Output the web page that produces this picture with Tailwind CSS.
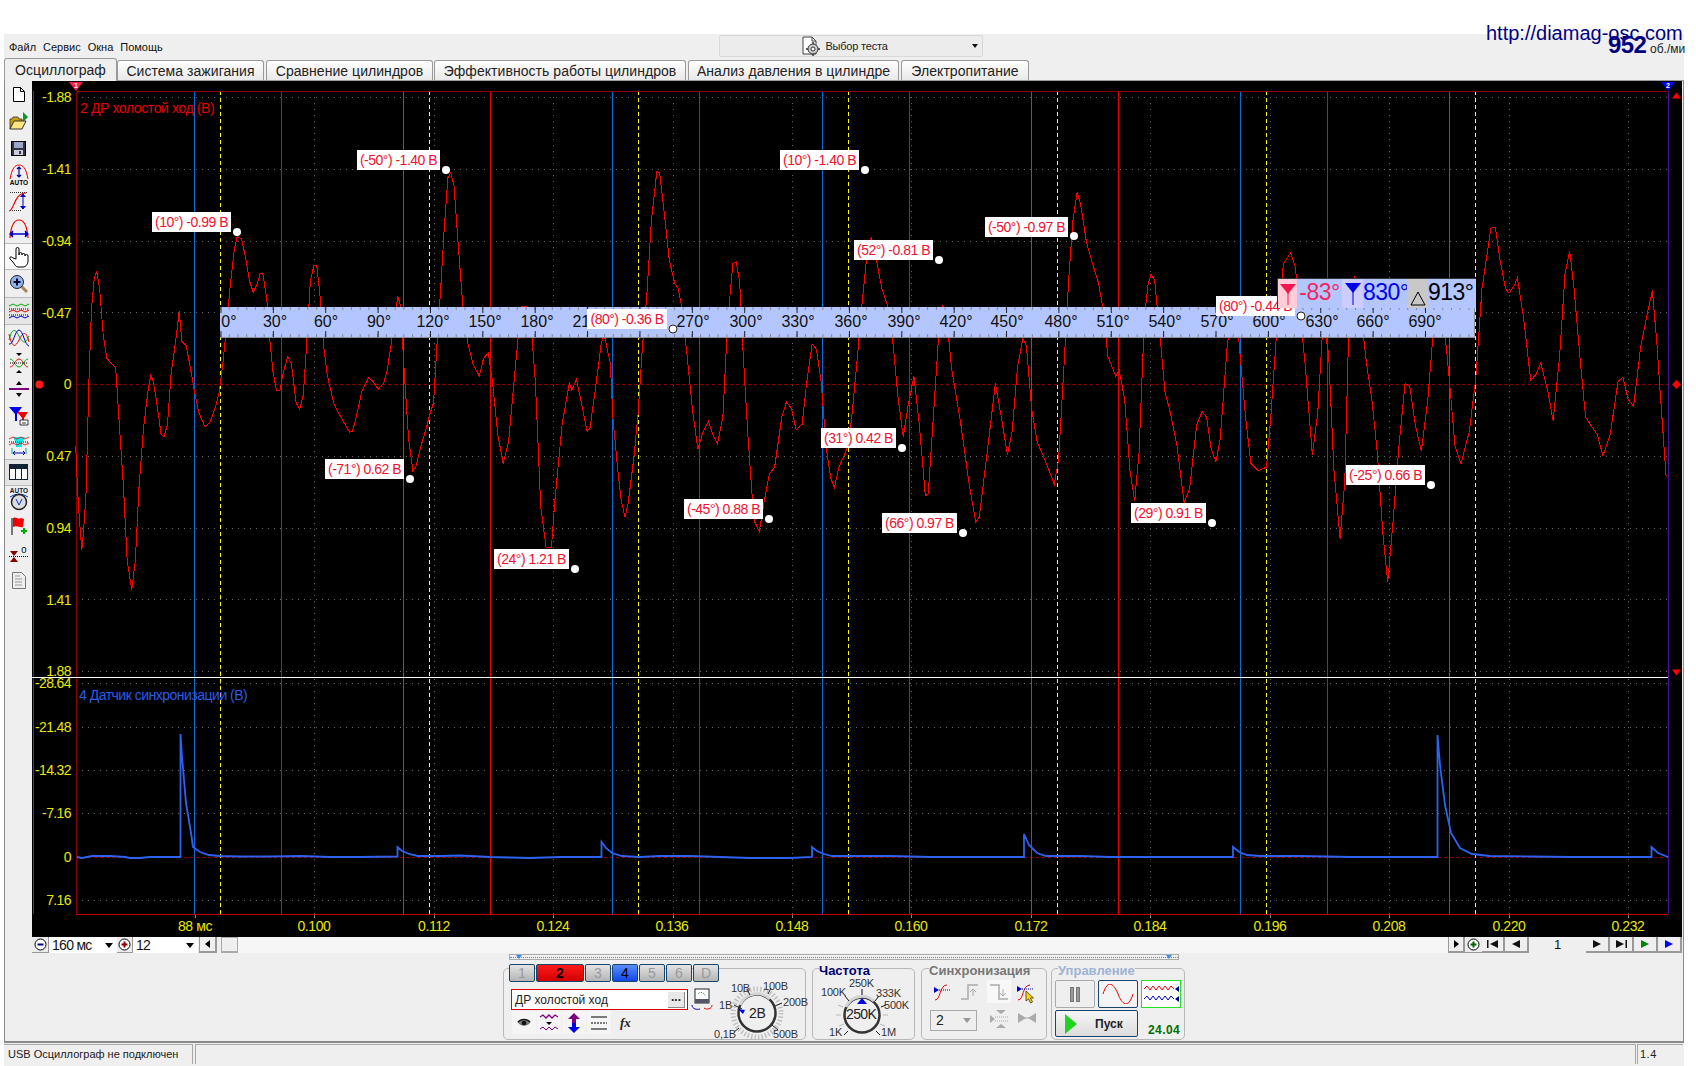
<!DOCTYPE html>
<html lang="ru">
<head>
<meta charset="utf-8">
<title>Diamag осциллограф</title>
<script src="https://cdn.jsdelivr.net/npm/@tailwindcss/browser@4"></script>
</head>
<body class="bg-white">
<div class="relative w-[1696px] h-[1066px] overflow-hidden bg-white font-['Liberation_Sans',sans-serif] text-black">

  <!-- адрес и обороты поверх шапки -->
  <div class="absolute left-[1486px] top-[21px] text-[20px] leading-[24px] text-[#000080] z-10">http://diamag-osc.com</div>
  <div class="absolute left-[1608px] top-[32px] text-[24px] leading-[26px] font-bold text-[#000080] z-20 tracking-[-0.6px]">952</div>
  <div class="absolute left-[1650px] top-[42px] whitespace-nowrap text-[12px] leading-[14px] text-[#222] z-20">об./ми</div>

  <div class="h-[34px]"></div>

  <div class="ml-[4px] w-[1680px] h-[1032px] bg-[#efefef] flex flex-col">
    <!-- меню -->
    <div class="h-[24px] flex items-center">
      <div class="w-[715px] pl-[5px] flex gap-[7px] text-[11px] text-[#111] pt-[2px]">
        <span>Файл</span><span>Сервис</span><span>Окна</span><span>Помощь</span>
      </div>
      <div class="w-[264px] h-[22px] mt-[-1px] border border-[#d8d8d8] rounded-[2px] bg-[#ececec] flex items-center">
        <div class="flex-1 flex items-center justify-center gap-[3px] pt-[1px] text-[11px] tracking-[-0.2px] text-[#222]">
          <svg width="22" height="20" viewBox="0 0 22 20"><path d="M3 1h9l4 4v13H3z" fill="#fff" stroke="#444"/><path d="M12 1v4h4" fill="none" stroke="#444"/><circle cx="13" cy="13" r="5" fill="#ccc" stroke="#333"/><circle cx="13" cy="13" r="2" fill="#fff" stroke="#333"/><path d="M8 13H6M20 13h-2M13 8V6M13 20v-2" stroke="#333" stroke-width="1.500"/></svg>
          <span>Выбор теста</span>
        </div>
        <svg width="14" height="8" viewBox="0 0 14 8" class="mr-[0px]"><path d="M4 2h6L7 6z" fill="#111"/></svg>
      </div>
    </div>

    <!-- вкладки -->
    <div class="h-[23px] flex items-end text-[14px] leading-[20px] tracking-[0.05px] whitespace-nowrap text-[#222] border-b border-[#9a9a9a]">
      <div class="w-[113px] h-[23px] border border-b-0 border-[#9a9a9a] rounded-t-[3px] bg-[#efefef] flex items-center justify-center relative top-[1px]">Осциллограф</div>
      <div class="w-[147px] h-[20px] border border-b-0 border-[#9a9a9a] rounded-t-[3px] bg-gradient-to-b from-white to-[#e9e9e9] flex items-center justify-center">Система зажигания</div>
      <div class="w-[167px] h-[20px] ml-[2px] border border-b-0 border-[#9a9a9a] rounded-t-[3px] bg-gradient-to-b from-white to-[#e9e9e9] flex items-center justify-center">Сравнение цилиндров</div>
      <div class="w-[252px] h-[20px] ml-[1px] border border-b-0 border-[#9a9a9a] rounded-t-[3px] bg-gradient-to-b from-white to-[#e9e9e9] flex items-center justify-center">Эффективность работы цилиндров</div>
      <div class="w-[211px] h-[20px] ml-[2px] border border-b-0 border-[#9a9a9a] rounded-t-[3px] bg-gradient-to-b from-white to-[#e9e9e9] flex items-center justify-center">Анализ давления в цилиндре</div>
      <div class="w-[128px] h-[20px] ml-[2px] border border-b-0 border-[#9a9a9a] rounded-t-[3px] bg-gradient-to-b from-white to-[#e9e9e9] flex items-center justify-center">Электропитание</div>
    </div>

    <!-- панель инструментов и график -->
    <div class="h-[856px] flex border-x border-[#8a8a8a]">
      <div class="w-[27px] flex flex-col items-center shrink-0">
        <div class="h-[26px] w-full flex items-center justify-center"><svg width="14" height="17" viewBox="0 0 14 17"><path d="M1.5 1.5h7l4 4v10h-11z" fill="#fff" stroke="#000"/><path d="M8.5 1.5v4h4" fill="none" stroke="#000"/></svg></div>
        <div class="h-[28px] w-full flex items-center justify-center"><svg width="20" height="20" viewBox="0 0 20 20"><path d="M14 1l5 5-5 5z" fill="#0a9a2a"/><path d="M1 18V8h2l1-2h5l1 2h3v3H5z" fill="#c8a000" stroke="#333" stroke-width=".8"/><path d="M1 18l4-8h12l-4 8z" fill="#ffe680" stroke="#333"/></svg></div>
        <div class="h-[26px] w-full flex items-center justify-center"><svg width="15" height="15" viewBox="0 0 15 15"><rect x=".5" y=".5" width="14" height="14" fill="#334" stroke="#000"/><rect x="3" y="1" width="9" height="6" fill="#9aa8c8"/><rect x="3" y="9" width="9" height="5" fill="#ccd"/><rect x="8" y="10" width="2" height="3" fill="#334"/></svg></div>
        <div class="h-[27px] w-full flex items-center justify-center"><svg width="22" height="22" viewBox="0 0 22 22"><path d="M2 15C4 4 7 1 11 1s7 3 9 14" fill="none" stroke="#e00"/><path d="M11 3v10M9 5l2-2 2 2M9 11l2 2 2-2" fill="none" stroke="#00a" stroke-width="1.2"/><text x="11" y="21" text-anchor="middle" font-size="6.5" font-weight="700" font-family="Liberation Sans">AUTO</text></svg></div>
        <div class="h-[28px] w-full flex items-center justify-center"><svg width="22" height="22" viewBox="0 0 22 22"><path d="M2 1.5h18M2 19.5h12" stroke="#333" stroke-dasharray="1 1"/><path d="M1 20c5 0 5-18 17-18" fill="none" stroke="#e00" stroke-width="1.2"/><path d="M15 3v15M12.500 6l2.500-3 2.500 3M12.500 15l2.500 3 2.500-3" fill="#00c" stroke="#00c"/></svg></div>
        <div class="h-[27px] w-full flex items-center justify-center"><svg width="22" height="22" viewBox="0 0 22 22"><path d="M2 19C3 6 7 1 11 1s8 5 9 18" fill="none" stroke="#e00" stroke-width="1.2"/><path d="M2 15h18M5 12l-3 3 3 3M17 12l3 3-3 3" fill="#00c" stroke="#00c" stroke-width="1.3"/></svg></div>
        <div class="h-[27px] w-full flex items-center justify-center bg-[#f8f8f8] border-y border-[#bbb]"><svg width="20" height="22" viewBox="0 0 20 22"><path d="M7 13V3a1.500 1.500 0 0 1 3 0v6l0-1a1.500 1.500 0 0 1 3 0v1a1.500 1.500 0 0 1 3 0v1a1.500 1.500 0 0 1 3 0v5c0 3-2 6-5 6H9c-2 0-3-2-5-5l-3-3c-1-2 1-3 3-1z" fill="#fff" stroke="#000"/></svg></div>
        <div class="h-[27px] w-full flex items-center justify-center"><svg width="20" height="20" viewBox="0 0 20 20"><path d="M12 12l6 6" stroke="#a8884a" stroke-width="3"/><circle cx="8" cy="8" r="6.500" fill="#8fb4e8" stroke="#223"/><path d="M4.500 8h7M8 4.500v7" stroke="#003" stroke-width="2"/></svg></div>
        <div class="h-[28px] w-full flex items-center justify-center bg-[#e6e6e6] border-y border-[#bbb]"><svg width="22" height="20" viewBox="0 0 22 20"><path d="M1 5l4-2 4 2 4-2 4 2 4-2" fill="none" stroke="#0a0"/><path d="M1 11l4-2 4 2 4-2 4 2 4-2" fill="none" stroke="#e00"/><path d="M1 17l4-2 4 2 4-2 4 2 4-2" fill="none" stroke="#00c"/><path d="M1 8h20M1 14h20" stroke="#000" stroke-dasharray="1 1"/></svg></div>
        <div class="h-[25px] w-full flex items-center justify-center"><svg width="22" height="20" viewBox="0 0 22 20"><path d="M1 12C4 0 7 0 11 8s7 8 10 0" fill="none" stroke="#0a0"/><path d="M1 6c3 14 6 14 10 6s7-10 10 2" fill="none" stroke="#e00"/><path d="M1 16C5 18 7 2 11 2s6 16 10 16" fill="none" stroke="#00c"/></svg></div>
        <div class="h-[26px] w-full flex items-center justify-center"><svg width="20" height="22" viewBox="0 0 20 22"><path d="M7 1h6l-3 3zM7 21h6l-3-3z" fill="#000"/><path d="M1 7c4 0 5 8 9 8s5-8 9-8" fill="none" stroke="#0a0"/><path d="M1 15c4 0 5-8 9-8s5 8 9 8" fill="none" stroke="#e00"/><path d="M1 11h18" stroke="#000" stroke-dasharray="1 1"/></svg></div>
        <div class="h-[26px] w-full flex items-center justify-center"><svg width="20" height="18" viewBox="0 0 20 18"><path d="M7 5h6l-3-4zM7 13h6l-3 4z" fill="#000"/><path d="M0 9h20" stroke="#800080" stroke-width="2"/></svg></div>
        <div class="h-[28px] w-full flex items-center justify-center"><svg width="20" height="20" viewBox="0 0 20 20"><path d="M0 1h13L8 8v7H6V8z" fill="#00e"/><path d="M8 6h11l-4 6v7h-2v-7z" fill="#e00"/><path d="M11 14h8v5h-8z" fill="#fff" stroke="#334"/><path d="M13 17h4" stroke="#334"/></svg></div>
        <div class="h-[29px] w-full flex items-center justify-center"><svg width="22" height="22" viewBox="0 0 22 22"><path d="M5 3h12l-3 6v4H8V9z" fill="#0ee"/><path d="M1 5l4-2 4 2 4-2 4 2 4-2M1 11l4-2 4 2 4-2 4 2 4-2" fill="none" stroke="#e00" stroke-width=".8"/><path d="M1 8h20" stroke="#000" stroke-dasharray="1 1"/><path d="M5 19h12M7 17l-2 2 2 2M15 17l2 2-2 2" fill="none" stroke="#00a"/><path d="M4 14v6M18 14v6" stroke="#0aa"/></svg></div>
        <div class="h-[27px] w-full flex items-center justify-center bg-[#e4e4e4] border-y border-[#bbb]"><svg width="20" height="17" viewBox="0 0 20 17"><rect x=".5" y=".5" width="18" height="15" fill="#fff" stroke="#123"/><rect x="1" y="1" width="17" height="4" fill="#123"/><path d="M6.500 1v14M12.500 1v14" stroke="#123"/></svg></div>
        <div class="h-[25px] w-full flex flex-col items-center justify-center"><svg width="22" height="24" viewBox="0 0 22 24"><text x="11" y="6" text-anchor="middle" font-size="6.500" font-weight="700" font-family="Liberation Sans" fill="#123">AUTO</text><path d="M2 10Q11 4 20 10" fill="none" stroke="#03c"/><circle cx="11" cy="15" r="7.500" fill="#ddd" stroke="#222" stroke-width="1.500"/><path d="M8 12l3 6 3-6" fill="none" stroke="#03c"/></svg></div>
        <div class="h-[29px] w-full flex items-center justify-center"><svg width="18" height="20" viewBox="0 0 18 20"><path d="M2 2v17" stroke="#000"/><path d="M3 2c3-2 5 2 8 0l3 1-1 8c-3 1-6-2-10 0z" fill="#e00"/><path d="M11 15h6M14 12v6" stroke="#0a0" stroke-width="2"/></svg></div>
        <div class="h-[27px] w-full flex items-center justify-center"><svg width="20" height="18" viewBox="0 0 20 18"><path d="M1 6h8L5 11zM1 17h8L5 12z" fill="#800"/><path d="M0 11.500h20" stroke="#000" stroke-dasharray="1 1"/><text x="15" y="8" text-anchor="middle" font-size="9.500" font-family="Liberation Sans">0</text></svg></div>
        <div class="h-[27px] w-full flex items-center justify-center"><svg width="14" height="17" viewBox="0 0 14 17"><path d="M.5.5h9l4 4v12H.5z" fill="#eee" stroke="#777"/><path d="M3 4h5M3 7h7M3 10h7M3 13h7" stroke="#999"/></svg></div>
      </div>

      <div class="relative w-[1650px] h-[856px] bg-black overflow-hidden shrink-0">
        <svg class="absolute inset-0" width="1650" height="856" viewBox="32 81 1650 856" fill="none">
          <!-- сетка -->
          <g stroke="#666" stroke-dasharray="1 5">
            <path d="M76 97.500H1668M76 169.500H1668M76 241.500H1668M76 312.500H1668M76 456.500H1668M76 528.500H1668M76 599.500H1668M76 671.500H1668"/>
            <path d="M76 683.500H1668M76 727.500H1668M76 770.500H1668M76 813.500H1668M76 900.500H1668"/>
            <path d="M314.500 91V914M434.500 91V914M553.500 91V914M673.500 91V914M792.500 91V914M911.500 91V914M1150.500 91V914M1270.500 91V914M1389.500 91V914M1509.500 91V914M1628.500 91V914"/>
          </g>
          <path d="M76 384.500H1668M76 857.500H1668" stroke="#8a0000" stroke-dasharray="3 3"/>
          <path d="M195.500 914v4M314.500 914v4M434.500 914v4M553.500 914v4M673.500 914v4M792.500 914v4M911.500 914v4M1031.500 914v4M1150.500 914v4M1270.500 914v4M1389.500 914v4M1509.500 914v4M1628.500 914v4" stroke="#888"/>

          <!-- метки цилиндров -->
          <path d="M281.500 91V914M490.500 91V914M699.500 91V914M909.500 91V914M1118.500 91V914M1327.500 91V914" stroke="#f00000"/>
          <path d="M194.500 91V914M403.500 91V914M612.500 91V914M822.500 91V914M1031.500 91V914M1240.500 91V914M1449.500 91V914" stroke="#0a6cd8"/>
          <path d="M220.500 91V914M429.500 91V914M638.500 91V914M848.500 91V914M1057.500 91V914M1266.500 91V914M1475.500 91V914" stroke="#ffff00" stroke-dasharray="4 3"/>

          <!-- рамка -->
          <path d="M76 91.500H1668" stroke="#8a0000"/>
          <path d="M76 914.500H1668" stroke="#c00000"/>
          <path d="M76.500 91V914" stroke="#8a0000"/>
          <path d="M33.500 91V914" stroke="#e00000"/>
          <path d="M1668.500 91V914" stroke="#4a10a0"/>
          <path d="M32 677.500H1668" stroke="#fff"/>

          <!-- канал 2 -->
          <g stroke="#ff0000" shape-rendering="crispEdges">
            <polyline vector-effect="non-scaling-stroke" transform="translate(30 60) scale(.35714)" points="128,1080 133,1200 138,1280 145,1372 150,1320 157,1210 165,900 172,700 180,610 187,592 195,640 205,770 215,835 228,850 240,862 250,1020 262,1200 272,1400 285,1485 295,1400 305,1200 318,1030 330,930 338,883 345,900 355,960 367,1048 375,1055 385,1020 395,880 410,770 418,702 425,788 437,800 447,850 460,925 472,985 490,1028 505,1012 520,970 530,930 540,850 548,770 560,640 572,530 580,495 592,500 605,560 615,620 625,650 635,630 645,597 652,598 663,670 672,790 680,870 690,925 700,925 708,880 722,830 732,850 745,960 755,978 765,940 775,790 785,620 795,575 803,575 812,660 822,800 832,880 850,960 865,990 882,1020 895,1042 903,1040 912,1005 930,925 948,890 960,900 975,922 990,905 1000,870 1015,770 1030,662 1038,690 1047,860 1060,1060 1072,1150 1080,1140 1095,1080 1110,1030 1120,990 1130,960 1140,790 1150,640 1160,470 1170,330 1178,315 1187,350 1200,530 1212,690 1225,790 1240,850 1258,885 1270,835 1283,820 1295,900 1310,1050 1325,1130 1340,1070 1360,850 1375,690 1390,690 1405,770 1415,900 1430,1250 1445,1365 1460,1365 1470,1230 1490,1020 1510,905 1517,925 1530,895 1545,965 1560,1040 1568,1030"/>
            <polyline vector-effect="non-scaling-stroke" transform="translate(580 60) scale(.35714)" points="28,1030 42,930 60,790 68,770 85,850 92,1000 105,1140 115,1230 126,1280 135,1240 150,1120 162,1000 175,800 187,660 200,450 215,312 223,315 235,420 250,560 265,625 275,640 285,690 300,830 315,980 330,1090 345,1040 360,1012 372,1050 385,1075 400,1000 410,800 420,660 428,570 437,565 447,620 455,790 470,1050 482,1220 490,1295 502,1320 515,1240 530,1160 545,1140 565,1000 578,958 592,975 605,1035 622,1020 635,900 650,795 662,810 675,900 690,1090 702,1170 712,1198 725,1140 745,1095 760,1010 775,850 790,680 802,560 815,497 830,560 845,640 860,685 877,800 890,940 905,1055 920,960 935,885 950,1020 967,1220 975,1215 990,990 1005,760 1015,688 1025,700 1040,860 1065,1010 1090,1190 1108,1293 1118,1280 1140,1100 1163,905 1178,990 1197,1105 1210,1040 1225,860 1240,780 1250,800 1265,980 1280,1070 1300,1115 1328,1188 1340,1120 1355,860 1368,620 1380,450 1392,370 1402,405 1418,510 1435,570 1452,625 1465,700 1478,830 1500,885 1510,870 1525,950 1540,1150"/>
            <polyline vector-effect="non-scaling-stroke" transform="translate(1130 60) scale(.361 .35714)" points="0,1150 13,1235 25,1100 40,720 50,630 58,600 68,615 82,760 97,930 110,980 130,1080 150,1240 165,1200 185,1020 200,985 212,1000 225,1090 238,1125 250,1060 270,790 290,700 302,790 320,1000 335,1130 355,1150 378,1140 390,1000 405,780 425,570 445,540 458,580 470,700 485,850 505,1105 520,990 535,730 550,820 565,1150 582,1340 595,1180 605,790 622,605 640,710 655,850 670,950 685,1100 700,1320 714,1462 728,1300 745,1080 762,905 775,915 790,1020 807,1095 825,950 845,700 870,740 885,900 900,1080 917,1130 940,1040 958,890 975,640 1000,470 1012,468 1025,560 1040,640 1050,653 1065,630 1073,610 1090,720 1110,897 1125,880 1138,848 1158,930 1172,1010 1190,830 1205,600 1218,535 1230,640 1248,850 1262,1000 1275,1020 1295,1050 1310,1108 1330,1050 1352,900 1365,888 1380,950 1395,970 1415,800 1433,710 1447,645 1460,800 1470,950 1485,1165"/>
          </g>

          <!-- канал 4 -->
          <polyline stroke="#2d63f0" stroke-width="1.800" points="77,857 82,858 92,856 110,856 125,857 130,858 140,858 150,857 180.500,857 180.500,734 182,757 186,803 191,833 193,847 200,852 209,855 219,856 240,856.500 270,856.500 300,856 330,857 360,857 397.500,856.500 397.500,847 402,851 409,854 418,856 440,856 460,855.500 490,857 510,857.500 530,858 560,857 601.500,857 601.500,842 606,848 612,853 622,856 640,857 660,856 690,856 720,857 750,858 790,858 812,857 812,847 817,851 824,854 832,856 860,856 890,856 930,857 960,857 1000,857 1024,857 1024,834 1029,845 1037,853 1046,856 1080,856 1110,857 1150,857 1200,857 1233,857 1233,847 1239,852 1247,855 1260,856 1300,856 1350,857 1400,857 1437.500,857 1437.500,735 1440,765 1445,805 1451,833 1460,848 1472,854 1490,856 1530,856.500 1570,857 1620,857 1651.500,857 1651.500,847 1658,853 1668,857"/>

          <!-- маркеры -->
          <path d="M69 82h14l-7 9z" fill="#ff1a50"/>
          <path d="M1661 82h14l-7 9z" fill="#0000ee"/>
          <circle cx="39.500" cy="384.500" r="4" fill="#ff1a1a"/>
          <path d="M1676.500 380l4.500 4.500-4.500 4.500-4.500-4.500z" fill="#ff0000"/>
          <path d="M1672 98.500h9l-4.500-6z" fill="#ff0000"/>
          <path d="M1672 669.500h9l-4.500 6z" fill="#ff0000"/>
        </svg>
        <span class="absolute left-[44px] top-[1px] -translate-x-1/2 text-[7px] leading-[8px] font-bold text-white">1</span>
        <span class="absolute left-[1636px] top-[1px] -translate-x-1/2 text-[7px] leading-[8px] font-bold text-white">2</span>

        <!-- подписи оси Y -->
        <div class="absolute left-0 top-0 w-[39px] h-full text-[14px] leading-[16px] tracking-[-0.6px] text-[#e8e800] text-right">
          <span class="absolute right-0 top-[8px]">-1.88</span>
          <span class="absolute right-0 top-[80px]">-1.41</span>
          <span class="absolute right-0 top-[152px]">-0.94</span>
          <span class="absolute right-0 top-[224px]">-0.47</span>
          <span class="absolute right-0 top-[295px]">0</span>
          <span class="absolute right-0 top-[367px]">0.47</span>
          <span class="absolute right-0 top-[439px]">0.94</span>
          <span class="absolute right-0 top-[511px]">1.41</span>
          <span class="absolute right-0 top-[582px]">1.88</span>
          <span class="absolute right-0 top-[594px]">-28.64</span>
          <span class="absolute right-0 top-[638px]">-21.48</span>
          <span class="absolute right-0 top-[681px]">-14.32</span>
          <span class="absolute right-0 top-[724px]">-7.16</span>
          <span class="absolute right-0 top-[768px]">0</span>
          <span class="absolute right-0 top-[811px]">7.16</span>
        </div>

        <!-- подписи оси X -->
        <div class="absolute left-0 top-[837px] w-full text-[14px] leading-[16px] tracking-[-0.4px] text-[#e8e800]">
          <span class="absolute left-[163px] -translate-x-1/2 whitespace-nowrap">88 мс</span>
          <span class="absolute left-[282px] -translate-x-1/2">0.100</span>
          <span class="absolute left-[402px] -translate-x-1/2">0.112</span>
          <span class="absolute left-[521px] -translate-x-1/2">0.124</span>
          <span class="absolute left-[640px] -translate-x-1/2">0.136</span>
          <span class="absolute left-[760px] -translate-x-1/2">0.148</span>
          <span class="absolute left-[879px] -translate-x-1/2">0.160</span>
          <span class="absolute left-[999px] -translate-x-1/2">0.172</span>
          <span class="absolute left-[1118px] -translate-x-1/2">0.184</span>
          <span class="absolute left-[1238px] -translate-x-1/2">0.196</span>
          <span class="absolute left-[1357px] -translate-x-1/2">0.208</span>
          <span class="absolute left-[1477px] -translate-x-1/2">0.220</span>
          <span class="absolute left-[1596px] -translate-x-1/2">0.232</span>
        </div>

        <div class="absolute left-[48px] top-[19px] text-[14px] leading-[16px] tracking-[-0.4px] text-[#e60000]">2 ДР холостой ход (В)</div>
        <div class="absolute left-[47px] top-[606px] text-[14px] leading-[16px] tracking-[-0.5px] text-[#2a5ce8]">4 Датчик синхронизации (В)</div>

        <!-- линейка углов -->
        <div class="absolute left-[188px] top-[226px] w-[1255px] h-[31px] bg-[#b3c6ff] border-b border-r border-[#8f8f8f] text-[16px] leading-[20px] text-[#111]">
          <svg class="absolute inset-0" width="1255" height="31" fill="none">
            <path d="M0 1.500H1255M0 28.500H1255" stroke="#888" stroke-width="3" stroke-dasharray="1 7.730"/>
            <path d="M.5 3H1255M.5 27H1255" stroke="#222" stroke-width="6" stroke-dasharray="1 51.370"/>
          </svg>
          <span class="absolute left-[9px] top-[5px] -translate-x-1/2">0°</span>
          <span class="absolute left-[55px] top-[5px] -translate-x-1/2">30°</span>
          <span class="absolute left-[106px] top-[5px] -translate-x-1/2">60°</span>
          <span class="absolute left-[159px] top-[5px] -translate-x-1/2">90°</span>
          <span class="absolute left-[213px] top-[5px] -translate-x-1/2">120°</span>
          <span class="absolute left-[265px] top-[5px] -translate-x-1/2">150°</span>
          <span class="absolute left-[317px] top-[5px] -translate-x-1/2">180°</span>
          <span class="absolute left-[369px] top-[5px] -translate-x-1/2">210°</span>
          <span class="absolute left-[473px] top-[5px] -translate-x-1/2">270°</span>
          <span class="absolute left-[526px] top-[5px] -translate-x-1/2">300°</span>
          <span class="absolute left-[578px] top-[5px] -translate-x-1/2">330°</span>
          <span class="absolute left-[631px] top-[5px] -translate-x-1/2">360°</span>
          <span class="absolute left-[684px] top-[5px] -translate-x-1/2">390°</span>
          <span class="absolute left-[736px] top-[5px] -translate-x-1/2">420°</span>
          <span class="absolute left-[787px] top-[5px] -translate-x-1/2">450°</span>
          <span class="absolute left-[841px] top-[5px] -translate-x-1/2">480°</span>
          <span class="absolute left-[893px] top-[5px] -translate-x-1/2">510°</span>
          <span class="absolute left-[945px] top-[5px] -translate-x-1/2">540°</span>
          <span class="absolute left-[997px] top-[5px] -translate-x-1/2">570°</span>
          <span class="absolute left-[1049px] top-[5px] -translate-x-1/2">600°</span>
          <span class="absolute left-[1102px] top-[5px] -translate-x-1/2">630°</span>
          <span class="absolute left-[1153px] top-[5px] -translate-x-1/2">660°</span>
          <span class="absolute left-[1205px] top-[5px] -translate-x-1/2">690°</span>
        </div>

        <!-- значения в точках -->
        <div class="text-[14px] leading-[20px] tracking-[-0.5px] text-[#f01030]">
          <span class="absolute left-[120px] top-[131px] h-[20px] w-[79px] bg-white text-center">(10°) -0.99 В</span>
          <span class="absolute left-[325px] top-[69px] h-[20px] w-[83px] bg-white text-center">(-50°) -1.40 В</span>
          <span class="absolute left-[293px] top-[378px] h-[20px] w-[79px] bg-white text-center">(-71°) 0.62 В</span>
          <span class="absolute left-[462px] top-[468px] h-[20px] w-[75px] bg-white text-center">(24°) 1.21 В</span>
          <span class="absolute left-[555px] top-[228px] h-[20px] w-[80px] bg-white text-center">(80°) -0.36 В</span>
          <span class="absolute left-[748px] top-[69px] h-[20px] w-[79px] bg-white text-center">(10°) -1.40 В</span>
          <span class="absolute left-[652px] top-[418px] h-[20px] w-[79px] bg-white text-center">(-45°) 0.88 В</span>
          <span class="absolute left-[789px] top-[347px] h-[20px] w-[75px] bg-white text-center">(31°) 0.42 В</span>
          <span class="absolute left-[822px] top-[159px] h-[20px] w-[79px] bg-white text-center">(52°) -0.81 В</span>
          <span class="absolute left-[953px] top-[136px] h-[20px] w-[83px] bg-white text-center">(-50°) -0.97 В</span>
          <span class="absolute left-[850px] top-[432px] h-[20px] w-[75px] bg-white text-center">(66°) 0.97 В</span>
          <span class="absolute left-[1099px] top-[422px] h-[20px] w-[75px] bg-white text-center">(29°) 0.91 В</span>
          <span class="absolute left-[1314px] top-[384px] h-[20px] w-[79px] bg-white text-center">(-25°) 0.66 В</span>
          <span class="absolute left-[1184px] top-[215px] h-[20px] w-[79px] bg-white text-center">(80°) -0.44 В</span>
        </div>
        <svg class="absolute inset-0" width="1650" height="856" viewBox="32 81 1650 856">
          <g fill="#fff">
            <circle cx="237" cy="232" r="4"/><circle cx="446" cy="170" r="4"/><circle cx="410" cy="479" r="4"/><circle cx="575" cy="569" r="4"/>
            <circle cx="865" cy="170" r="4"/><circle cx="769" cy="519" r="4"/><circle cx="902" cy="448" r="4"/><circle cx="939" cy="260" r="4"/>
            <circle cx="1074" cy="236" r="4"/><circle cx="963" cy="533" r="4"/><circle cx="1212" cy="523" r="4"/><circle cx="1431" cy="485" r="4"/>
            <circle cx="673" cy="329" r="4" stroke="#222"/><circle cx="1301" cy="316" r="4" stroke="#222"/>
          </g>
        </svg>

        <!-- показания курсоров -->
        <div class="absolute left-[1245px] top-[197px] w-[199px] h-[30px] bg-[#b3c6ff] border-t border-l border-[#333] flex items-center text-[23px] leading-[24px] tracking-[-0.5px]">
          <div class="w-[19px] h-full bg-[#ffccd9] flex justify-center pt-[3px] shrink-0"><svg width="16" height="23" viewBox="0 0 16 23"><path d="M0 2h16L8 12z" fill="#f01850"/><path d="M8 10v13" stroke="#f01850"/></svg></div>
          <span class="w-[45px] text-center text-[#f02860] mb-[4px]">-83°</span>
          <div class="w-[21px] h-full bg-[#ccccff] flex justify-center pt-[3px] shrink-0"><svg width="16" height="23" viewBox="0 0 16 23"><path d="M0 1h16L8 11z" fill="#0000e8"/><path d="M8 9v14" stroke="#0000e8"/></svg></div>
          <span class="w-[44px] text-center text-[#0000e8] mb-[4px]">830°</span>
          <div class="w-[21px] h-full bg-[#c8c8c8] flex justify-center items-end pb-[2px] shrink-0"><svg width="16" height="15" viewBox="0 0 16 15"><path d="M8 1l7 13H1z" fill="none" stroke="#000"/></svg></div>
          <span class="w-[45px] text-center text-black mb-[4px]">913°</span>
        </div>
      </div>
    </div>

    <!-- масштаб и прокрутка -->
    <div class="h-[16px] flex border-x border-[#8a8a8a] pl-[27px] text-[#111] text-[14px] leading-[16px]">
      <div class="w-[17px] h-full bg-[#ececec] border-r border-b border-[#999] flex items-center justify-center"><svg width="13" height="13" viewBox="0 0 13 13"><circle cx="6.500" cy="6.500" r="5.500" fill="#fff" stroke="#000"/><path d="M3.500 6.500h6" stroke="#00008b" stroke-width="2"/></svg></div>
      <div class="w-[68px] h-full bg-white flex items-center justify-between pl-[3px] pr-[4px] tracking-[-0.7px]"><span>160 мс</span><svg width="8" height="5" viewBox="0 0 8 5"><path d="M0 0h8L4 5z" fill="#000"/></svg></div>
      <div class="w-[16px] h-full bg-[#ececec] border-r border-b border-[#999] flex items-center justify-center"><svg width="13" height="13" viewBox="0 0 13 13"><circle cx="6.500" cy="6.500" r="5.500" fill="#fff" stroke="#000"/><path d="M3.500 6.500h6M6.500 3.500v6" stroke="#8b0000" stroke-width="2"/></svg></div>
      <div class="w-[65px] h-full bg-white flex items-center justify-between pl-[3px] pr-[4px] tracking-[-0.7px]"><span>12</span><svg width="8" height="5" viewBox="0 0 8 5"><path d="M0 0h8L4 5z" fill="#000"/></svg></div>
      <div class="w-[18px] h-full ml-[1px] bg-[#efefef] border-r-2 border-b-2 border-l border-[#999] flex items-center justify-center"><svg width="5" height="8" viewBox="0 0 5 8"><path d="M5 0v8L0 4z" fill="#000"/></svg></div>
      <div class="w-[17px] h-full ml-[4px] bg-[#efefef] border border-b-2 border-[#aaa]"></div>
      <div class="w-[1210px] h-full bg-[#f6f6f6]"></div>
      <div class="w-[17px] h-full bg-[#efefef] border-r-2 border-b-2 border-l border-[#999] flex items-center justify-center"><svg width="5" height="8" viewBox="0 0 5 8"><path d="M0 0v8l5-4z" fill="#000"/></svg></div>
      <div class="w-[17px] h-full bg-[#ececec] border-b border-[#999] flex items-center justify-center"><svg width="13" height="13" viewBox="0 0 13 13"><circle cx="6.500" cy="6.500" r="5.500" fill="#fff" stroke="#000"/><path d="M3.500 6.500h6M6.500 3.500v6" stroke="#006400" stroke-width="2"/></svg></div>
      <div class="w-[23px] h-full bg-[#efefef] border-r-2 border-b-2 border-[#999] flex items-center justify-center"><svg width="11" height="8" viewBox="0 0 11 8"><path d="M11 0v8L3 4zM0 0h1.500v8H0z" fill="#111"/></svg></div>
      <div class="w-[24px] h-full bg-[#efefef] border-r-2 border-b-2 border-[#999] flex items-center justify-center"><svg width="8" height="8" viewBox="0 0 8 8"><path d="M8 0v8L0 4z" fill="#111"/></svg></div>
      <div class="w-[57px] h-full flex items-center justify-center text-[13px]">1</div>
      <div class="w-[24px] h-full bg-[#efefef] border-r-2 border-b-2 border-[#999] flex items-center justify-center"><svg width="8" height="8" viewBox="0 0 8 8"><path d="M0 0v8l8-4z" fill="#111"/></svg></div>
      <div class="w-[24px] h-full bg-[#efefef] border-r-2 border-b-2 border-[#999] flex items-center justify-center"><svg width="11" height="8" viewBox="0 0 11 8"><path d="M0 0v8l8-4zM9.500 0H11v8H9.500z" fill="#111"/></svg></div>
      <div class="w-[24px] h-full bg-[#efefef] border-r-2 border-b-2 border-[#999] flex items-center justify-center"><svg width="8" height="8" viewBox="0 0 8 8"><path d="M0 0v8l8-4z" fill="#068006"/></svg></div>
      <div class="w-[24px] h-full bg-[#efefef] border-r-2 border-b-2 border-[#999] flex items-center justify-center"><svg width="8" height="8" viewBox="0 0 8 8"><path d="M0 0v8l8-4z" fill="#0000ee"/></svg></div>
    </div>

    <!-- нижняя панель -->
    <div class="h-[90px] border-x border-b-2 border-[#8a8a8a]">
      <div class="ml-[504px] mt-[1px] w-[670px] h-[6px] border border-[#aaa] flex items-center relative">
        <div class="w-full border-t border-dotted border-[#3b8af0]"></div>
        <svg class="absolute left-[6px] top-0" width="6" height="4" viewBox="0 0 6 4"><path d="M0 0h6L3 4z" fill="#3b8af0"/></svg>
        <svg class="absolute right-[6px] top-0" width="6" height="4" viewBox="0 0 6 4"><path d="M0 0h6L3 4z" fill="#3b8af0"/></svg>
      </div>
      <div class="flex pl-[498px] mt-[8px] text-[#222]">
        <!-- каналы -->
        <div class="relative w-[303px] h-[72px] border border-[#b8b8b8] rounded-[5px] shrink-0">
          <div class="absolute left-[5px] top-[-5px] flex gap-[1px] text-[14px] leading-[16px] text-center">
            <div class="w-[26px] h-[18px] border border-[#16466e] rounded-[2px] bg-gradient-to-b from-[#e4e4e4] to-[#b4b4b4] text-[#999]">1</div>
            <div class="w-[48px] h-[18px] border border-[#16466e] rounded-[2px] bg-gradient-to-b from-[#ff1a1a] to-[#d00000] font-bold text-black">2</div>
            <div class="w-[26px] h-[18px] border border-[#16466e] rounded-[2px] bg-gradient-to-b from-[#e4e4e4] to-[#b4b4b4] text-[#999]">3</div>
            <div class="w-[26px] h-[18px] border border-[#16466e] rounded-[2px] bg-gradient-to-b from-[#5a8cff] to-[#1444e8] text-black">4</div>
            <div class="w-[26px] h-[18px] border border-[#16466e] rounded-[2px] bg-gradient-to-b from-[#e4e4e4] to-[#b4b4b4] text-[#999]">5</div>
            <div class="w-[26px] h-[18px] border border-[#16466e] rounded-[2px] bg-gradient-to-b from-[#e4e4e4] to-[#b4b4b4] text-[#999]">6</div>
            <div class="w-[26px] h-[18px] border border-[#16466e] rounded-[2px] bg-gradient-to-b from-[#e4e4e4] to-[#b4b4b4] text-[#999]">D</div>
          </div>
          <div class="absolute left-[7px] top-[20px] w-[177px] h-[21px] bg-white border border-[#e00000] flex items-center justify-between text-[12px] pl-[3px] pr-[2px]">
            <span>ДР холостой ход</span>
            <span class="w-[17px] h-[16px] bg-[#e8e8e8] border-r border-b border-[#888] text-center leading-[11px] font-bold">...</span>
          </div>
          <svg class="absolute left-[187px] top-[19px]" width="22" height="24" viewBox="0 0 22 24"><rect x="4" y="1" width="14" height="14" fill="#fff" stroke="#223"/><rect x="4" y="11" width="14" height="4" fill="#556"/><path d="M7 6l2-2 3 1 3 3" fill="none" stroke="#393" stroke-dasharray="1 1"/><path d="M1 17c0 4 5 5 8 4" fill="none" stroke="#00a"/><path d="M21 17c0 4-5 5-8 3" fill="none" stroke="#e00"/></svg>
          <div class="absolute left-[8px] top-[42px] flex gap-[1px]">
            <div class="w-[24px] h-[23px] bg-[#f5f5f5] flex items-center justify-center"><svg width="14" height="10" viewBox="0 0 18 12"><path d="M1 5c4-5 12-5 16 0-2 5-12 7-16 0z" fill="#777"/><ellipse cx="9" cy="6" rx="3" ry="3" fill="#111"/><path d="M1 5c4-5 12-5 16 0" fill="none" stroke="#111" stroke-width="1.500"/></svg></div>
            <div class="w-[24px] h-[23px] bg-[#f5f5f5] flex items-center justify-center"><svg width="20" height="20" viewBox="0 0 20 20"><path d="M1 4l3-2 3 3 3-3 3 3 3-3 3 2" fill="none" stroke="#800080" stroke-width="1.300"/><path d="M1 16l3-2 3 3 3-3 3 3 3-3 3 2" fill="none" stroke="#800080"/><path d="M7 9h6l-3 3z" fill="#000"/></svg></div>
            <div class="w-[24px] h-[23px] bg-[#f5f5f5] flex items-center justify-center"><svg width="16" height="20" viewBox="0 0 16 20"><path d="M8 0l6 6h-4v4H6V6H2z" fill="#800080"/><path d="M8 20l6-6h-4v-4H6v4H2z" fill="#0000ee"/></svg></div>
            <div class="w-[24px] h-[23px] bg-[#f5f5f5] flex items-center justify-center"><svg width="20" height="16" viewBox="0 0 20 16"><path d="M2 2h16M2 14h16" stroke="#000"/><path d="M2 8h16" stroke="#000" stroke-dasharray="2 1"/></svg></div>
            <span class="ml-[8px] mt-[2px] text-[13px] italic font-bold font-['Liberation_Serif',serif]">fx</span>
          </div>
          <div class="absolute left-[221px] top-[15px] text-[11px] leading-[12px] tracking-[-0.2px] text-[#333]">
            <svg class="absolute left-[5px] top-[2px]" width="54" height="54" viewBox="0 0 54 54" fill="none">
              <circle cx="27" cy="27" r="24" stroke="#c0c0c0" stroke-width="5" stroke-dasharray="1.500 2"/>
              <circle cx="27" cy="27" r="18.500" fill="#efefef" stroke="#333" stroke-width="2.500"/>
              <path d="M10 19a18.500 18.500 0 0 1 30-6" stroke="#d4d4d4" stroke-width="3"/>
              <path d="M12 23L4 19M20 9l-3-6M38 8l3-6M45 20l7-3M42 39l6 5M9 42l-5 4" stroke="#222"/>
              <path d="M8 23l7 1-2 4z" fill="#0000e0"/>
            </svg>
            <span class="absolute left-[6px] top-[-2px]">10В</span>
            <span class="absolute left-[38px] top-[-4px]">100В</span>
            <span class="absolute left-[-6px] top-[15px]">1В</span>
            <span class="absolute left-[58px] top-[12px]">200В</span>
            <span class="absolute left-[-11px] top-[44px]">0,1В</span>
            <span class="absolute left-[48px] top-[44px]">500В</span>
            <span class="absolute left-[24px] top-[21px] text-[14px] leading-[16px] text-[#222]">2В</span>
          </div>
        </div>

        <!-- частота -->
        <div class="relative w-[103px] h-[72px] ml-[6px] border border-[#b8b8b8] rounded-[5px] shrink-0">
          <span class="absolute left-[6px] top-[-5px] text-[13px] leading-[14px] font-bold bg-[#efefef] text-[#000070]">Частота</span>
          <svg class="absolute left-[22px] top-[19px]" width="54" height="54" viewBox="0 0 54 54" fill="none">
            <circle cx="27" cy="27" r="17.500" fill="#efefef" stroke="#333" stroke-width="2.500"/>
            <path d="M11 19a17.500 17.500 0 0 1 28-6" stroke="#d4d4d4" stroke-width="3"/>
            <path d="M27 1v6M10 8l4 5M44 8l-4 5M3 17l5 2M51 17l-5 2M1 27h5M53 27h-5M4 38l5-2M50 38l-5-2M9 47l4-4M45 47l-4-4" stroke="#b8b8b8"/>
            <path d="M27 1v6M10 8l4 5M44 8l-4 5M51 17l-5 2M9 47l4-4M45 47l-4-4" stroke="#222"/>
            <path d="M27 10l5 6H22z" fill="#0000e0"/>
          </svg>
          <div class="text-[11px] leading-[12px] tracking-[-0.2px] text-[#333]">
            <span class="absolute left-[36px] top-[8px]">250K</span>
            <span class="absolute left-[8px] top-[17px]">100K</span>
            <span class="absolute left-[63px] top-[18px]">333K</span>
            <span class="absolute left-[71px] top-[30px]">500K</span>
            <span class="absolute left-[16px] top-[57px]">1K</span>
            <span class="absolute left-[68px] top-[57px]">1M</span>
            <span class="absolute left-[33px] top-[37px] text-[14px] leading-[16px] tracking-[-0.6px] text-[#222]">250K</span>
          </div>
        </div>

        <!-- синхронизация -->
        <div class="relative w-[126px] h-[72px] ml-[6px] border border-[#b8b8b8] rounded-[5px] shrink-0">
          <span class="absolute left-[7px] top-[-5px] text-[13px] leading-[14px] font-bold bg-[#efefef] text-[#777]">Синхронизация</span>
          <svg class="absolute left-[11px] top-[13px]" width="20" height="20" viewBox="0 0 20 20"><path d="M2 18c6 0 4-15 12-15" fill="none" stroke="#e00"/><path d="M1 5v6l5-3z" fill="#0000d0"/><path d="M6 8h12" stroke="#00a" stroke-dasharray="1 1"/></svg>
          <svg class="absolute left-[38px] top-[13px]" width="20" height="20" viewBox="0 0 20 20"><path d="M1 17h7V3h10" fill="none" stroke="#aaa" stroke-width="1.500"/><path d="M13 14V7M10 10l3-3 3 3" fill="none" stroke="#aaa"/></svg>
          <div class="absolute left-[65px] top-[11px] w-[24px] h-[23px] bg-[#f8f8f8] flex items-center justify-center"><svg width="20" height="20" viewBox="0 0 20 20"><path d="M1 3h9v14h9" fill="none" stroke="#aaa" stroke-width="1.500"/><path d="M14 7v7M11 11l3 3 3-3" fill="none" stroke="#aaa"/></svg></div>
          <svg class="absolute left-[94px] top-[13px]" width="22" height="22" viewBox="0 0 22 22"><path d="M2 18c6 0 4-15 12-15" fill="none" stroke="#e00"/><path d="M1 4v6l5-3z" fill="#0000d0"/><path d="M6 7h12" stroke="#00a" stroke-dasharray="1 1"/><path d="M10 9v10l2.500-2 2 4 2-1-2-4h3z" fill="#ffd400" stroke="#222" stroke-width=".7"/></svg>
          <div class="absolute left-[8px] top-[41px] w-[47px] h-[21px] border border-[#aaa] flex items-center justify-between px-[5px] text-[14px]"><span>2</span><svg width="8" height="5" viewBox="0 0 8 5"><path d="M0 0h8L4 5z" fill="#999"/></svg></div>
          <svg class="absolute left-[67px] top-[40px]" width="20" height="20" viewBox="0 0 20 20" fill="#aaa"><path d="M7 1h10l-5 4zM7 19h10l-5-4z"/><path d="M1 6l5 4-5 4z"/><path d="M6 8h13M6 12h13" stroke="#aaa" stroke-dasharray="1 1"/></svg>
          <svg class="absolute left-[96px] top-[43px]" width="18" height="12" viewBox="0 0 18 12" fill="#aaa"><path d="M0 1l8 5-8 5zM18 1l-8 5 8 5z"/><path d="M0 6h18" stroke="#aaa"/></svg>
        </div>

        <!-- управление -->
        <div class="relative w-[134px] h-[72px] ml-[4px] border border-[#b8b8b8] rounded-[5px] shrink-0">
          <span class="absolute left-[6px] top-[-5px] text-[13px] leading-[14px] font-bold bg-[#efefef] text-[#9db4d4]">Управление</span>
          <div class="absolute left-[3px] top-[11px] w-[40px] h-[28px] border border-[#aaa] rounded-[2px] flex items-center justify-center gap-[2px]">
            <div class="w-[4px] h-[15px] bg-[#999] border border-[#777]"></div><div class="w-[4px] h-[15px] bg-[#999] border border-[#777]"></div>
          </div>
          <div class="absolute left-[46px] top-[11px] w-[40px] h-[28px] border border-[#16466e] rounded-[2px] bg-[#f4f4f4] flex items-center justify-center"><svg width="32" height="20" viewBox="0 0 32 20"><path d="M1 10C6-6 12 0 16 10s10 16 15 0" fill="none" stroke="#e00"/></svg></div>
          <div class="absolute left-[89px] top-[11px] w-[40px] h-[28px] border border-[#22e022] bg-white flex items-center justify-center"><svg width="36" height="22" viewBox="0 0 36 22"><path d="M1 6l3-3 3 4 3-4 3 4 3-4 3 4 3-4 3 4 3-4 3 3" fill="none" stroke="#e00"/><path d="M1 16l3-3 3 4 3-4 3 4 3-4 3 4 3-4 3 4 3-4 3 3" fill="none" stroke="#00c"/><path d="M36 3v6l-4-3zM36 13v6l-4-3z" fill="#008"/></svg></div>
          <div class="absolute left-[3px] top-[41px] w-[83px] h-[27px] border border-[#16466e] rounded-[2px] bg-gradient-to-b from-[#f6f6f6] to-[#dcdcdc] flex items-center">
            <svg class="ml-[9px]" width="12" height="20" viewBox="0 0 12 20"><path d="M0 0v20l12-10z" fill="#1fd41f"/></svg>
            <span class="ml-[18px] text-[12px] font-bold">Пуск</span>
          </div>
          <span class="absolute left-[96px] top-[54px] text-[12px] leading-[14px] font-bold tracking-[0.4px] text-[#007000]">24.04</span>
        </div>
      </div>
    </div>

    <!-- строка состояния -->
    <div class="h-[20px] mt-[1px] flex text-[11px] leading-[18px] text-[#222]">
      <div class="w-[189px] h-full border-t border-r border-[#a8a8a8] pl-[4px]">USB Осциллограф не подключен</div>
      <div class="w-[1441px] h-full ml-[2px] border-t border-x border-[#a8a8a8]"></div>
      <div class="w-[46px] h-full ml-[1px] border-t border-l border-[#a8a8a8] pl-[2px] tracking-[0.5px]">1.4</div>
    </div>
  </div>
</div>
</body>
</html>
